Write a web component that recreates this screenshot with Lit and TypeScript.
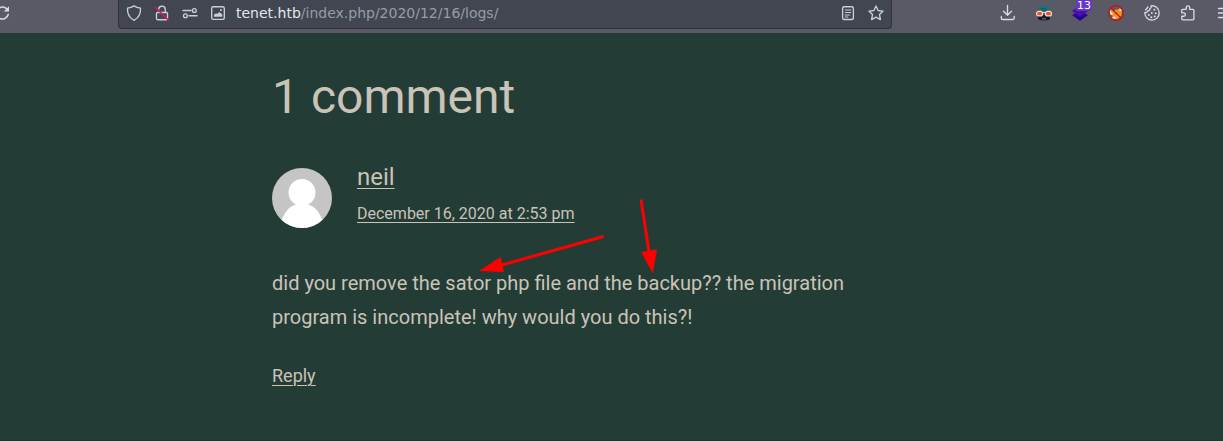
import { LitElement, html, css, svg } from "lit";
import { customElement, property } from "lit/decorators.js";

const icons: Record<string, unknown> = {
  reload: svg`<path d="M13.200 9.500A6 6 0 1 1 12 4.200" stroke-width="1.600"/><path d="M8.800 6.400h5.200V1.200z" fill="currentColor" stroke="none"/>`,
  shield: svg`<path d="M8 .9c1.8 1.3 4 2 6.5 2.2.4 5.3-1.8 9.6-6.500 12.200C3.300 12.700 1.100 8.400 1.500 3.100 4 2.900 6.200 2.200 8 .9z"/>`,
  lock: svg`<path d="M4.700 4.600a3.300 3.300 0 0 1 6.600-.2v3.100M3.500 7.500h9a1 1 0 0 1 1 1v5a1.200 1.200 0 0 1-1.200 1.200H3.700a1.200 1.200 0 0 1-1.200-1.200v-5a1 1 0 0 1 1-1z"/><path d="M1.300 2.300l13.200 13" stroke="#e0134a" stroke-width="1.500"/>`,
  sliders: svg`<path d="M1 5.500h8M7 10.700h8"/><circle cx="12.300" cy="5.500" r="1.900"/><circle cx="3.400" cy="10.700" r="1.900"/>`,
  image: svg`<rect x="1.700" y="1.700" width="12.600" height="12.600" rx="1.500"/><path d="M4 11.700V9.700l2-1.500 1.300.8 2-2 3 2.500v2.200z" fill="currentColor" stroke="none"/><rect x="10" y="4.300" width="1.700" height="1.700" fill="currentColor" stroke="none"/>`,
  reader: svg`<rect x="2.600" y="1.700" width="10.800" height="12.800" rx="1.500"/><path d="M5.200 5h5.600M5.200 7.500h5.600M5.200 10h4.500M5.200 12h2.500" stroke-width="1.100"/>`,
  star: svg`<path d="M8 1l2.100 4.500 5 .6-3.600 3.500.9 5L8 12.200l-4.400 2.400.9-5L.9 6.100l5-.6z"/>`,
  download: svg`<path d="M7.500 .5v9.500M3.500 6.300l4 4 4-4M1.300 11.500v1.500a1.500 1.500 0 0 0 1.500 1.500h9.900a1.500 1.500 0 0 0 1.500-1.500v-1.500"/>`,
  spy: svg`<g stroke="none"><path d="M1.500 7.500C2 3 4.500.3 8.500.3S14 2.800 14.500 7.500z" fill="#236e77"/><path d="M2 13.500V10h12v3.500c-.5 1.500-2.500 1.900-6 1.900s-5.500-.4-6-1.900z" fill="#171c24"/><path d="M6 12.800h4v2H6z" fill="#4c5460"/></g><path d="M5 3l5.500 2" stroke="#194c58" stroke-width="1"/><g stroke="#f0d9cf" stroke-width="1.200"><rect x=".6" y="6.300" width="5.900" height="4.600" rx="2" fill="#e8562e"/><rect x="9.500" y="6.300" width="5.900" height="4.600" rx="2" fill="#e8562e"/><path d="M6.500 7.500h3"/></g>`,
  layers: svg`<g stroke="none"><path d="M0 10l8-4 8 4-8 6z" fill="#26088c"/><path d="M0 6l8-5.500L16 6l-8 6z" fill="#4b0bb7"/></g>`,
  fox: svg`<g stroke="none"><path d="M2 3.500l3.500 3L8 4.500l4-.5 2 2-.5 4.500-4 3.800-5.500-.8.5-4L2 7z" fill="#ee941d"/><path d="M6.500 8.500l2-1.200 2 .7-2 1.500z" fill="#c45b16"/><path d="M1.500 5.500l3 2.500v2.500l-2-1zM11.500 3l2.500 2.500-2.500.5zM4 13l3-1.800 1.200 2.600z" fill="#f0ece5"/></g><circle cx="8" cy="8" r="7.300" stroke="#cf0d12" stroke-width="1.200"/><path d="M2.800 2.800l10.400 10.400" stroke="#cf0d12" stroke-width="1.200"/>`,
  cookie: svg`<path d="M7 .8A7.200 7.200 0 1 1 .8 7.400C2.300 8 3.500 7.300 3.500 5.800 5.500 6 6.300 5 5.800 3.600 7.200 3.300 7.700 2.200 7 .8zM1.600 5L4 2" stroke-width="1.300"/><g fill="currentColor" stroke="none"><circle cx="10.400" cy="4.700" r="1"/><circle cx="7.800" cy="8" r="1"/><circle cx="4.800" cy="10" r="1"/><circle cx="11.800" cy="8.300" r="1"/><circle cx="7.300" cy="12.200" r="1"/><circle cx="10.700" cy="11.500" r="1"/></g>`,
  puzzle: svg`<path d="M1.800 5.300a1 1 0 0 1 1-1h3.400V2.600a1.700 1.700 0 0 1 3.400 0v1.700h3.300a1 1 0 0 1 1 1v8.500a1 1 0 0 1-1 1H2.800a1 1 0 0 1-1-1v-2.600h1.900a1.700 1.700 0 0 0 0-3.400H1.800z"/>`,
  menu: svg`<path d="M2.500 3.500h12M2.500 8h12M2.500 12.500h12"/>`,
};

@customElement("ui-icon")
class UiIcon extends LitElement {
  @property() name = "";
  static styles = css`
    :host { display: block; width: 16px; height: 16px; flex: none; }
    svg { display: block; overflow: visible; }
  `;
  render() {
    return html`<svg width="16" height="16" viewBox="0 0 16 16" fill="none" stroke="currentColor" stroke-width="1.35" stroke-linejoin="round" stroke-linecap="round">${icons[this.name]}</svg>`;
  }
}

@customElement("browser-bar")
class BrowserBar extends LitElement {
  static styles = css`
    :host {
      display: flex; box-sizing: border-box; height: 34px; overflow: hidden;
      background: #5a5966; border-bottom: 1px solid #27383a; color: #d5dbe7;
      font-family: "DejaVu Sans", sans-serif;
    }
    .nav { width: 118px; flex: none; padding-top: 5px; box-sizing: border-box; }
    .nav ui-icon { margin-left: -5px; }
    .url {
      box-sizing: border-box; width: 774px; height: 29px; flex: none; display: flex;
      align-items: flex-start; gap: 12px; padding: 5px 7px 0 7px;
      background: #424651; border: 1px solid #30323d; border-top: 0; border-radius: 0 0 4px 4px;
      color: #c9ced9;
    }
    .address { flex: 1; margin-left: -2px; font-size: 14px; line-height: 17px; color: #989ca5; white-space: nowrap; }
    .host { color: #e3e6ee; }
    .tools { display: flex; gap: 20px; margin-left: 108px; padding-top: 5px; }
    .counter { position: relative; height: 16px; }
    .badge {
      position: absolute; left: 4px; top: -6px; width: 16px; height: 12px; border-radius: 2px;
      background: #6538c4; color: #fff; font-size: 11px; line-height: 13px; text-align: center;
    }
  `;
  render() {
    return html`
      <div class="nav"><ui-icon name="reload"></ui-icon></div>
      <div class="url">
        ${["shield", "lock", "sliders", "image"].map((n) => html`<ui-icon name=${n}></ui-icon>`)}
        <div class="address"><span class="host">tenet.htb</span>/index.php/2020/12/16/logs/</div>
        <ui-icon name="reader"></ui-icon><ui-icon name="star"></ui-icon>
      </div>
      <div class="tools">
        <ui-icon name="download"></ui-icon><ui-icon name="spy"></ui-icon>
        <div class="counter"><ui-icon name="layers"></ui-icon><span class="badge">13</span></div>
        ${["fox", "cookie", "puzzle", "menu"].map((n) => html`<ui-icon name=${n}></ui-icon>`)}
      </div>`;
  }
}

@customElement("comment-thread")
class CommentThread extends LitElement {
  static styles = css`
    :host { display: block; width: 610px; padding: 32px 0 0 272px; color: #c9c3b8; font-family: Roboto, sans-serif; }
    h2 { margin: 0; font-size: 48px; line-height: 62px; font-weight: 400; }
    .meta { display: flex; gap: 25px; margin-top: 40px; height: 60px; }
    .avatar { display: block; flex: none; }
    .who { display: flex; flex-direction: column; align-items: flex-start; }
    a { text-decoration: underline; text-decoration-thickness: 1px; }
    .name { font-size: 24px; line-height: 28px; margin-top: -5px; text-underline-offset: 3px; }
    .date { font-size: 16px; line-height: 20px; margin-top: 13px; text-underline-offset: 3px; }
    p { margin: 38px 0 0; font-size: 20px; line-height: 34px; }
    .reply { display: inline-block; margin-top: 31px; font-size: 18px; line-height: 22px; text-underline-offset: 3px; }
  `;
  render() {
    return html`
      <h2>1 comment</h2>
      <div class="meta">
        <svg class="avatar" width="60" height="60" viewBox="0 0 60 60">
          <defs><clipPath id="round"><circle cx="30" cy="30" r="30"/></clipPath></defs>
          <g clip-path="url(#round)">
            <rect width="60" height="60" fill="#c5c5c5"/>
            <circle cx="30" cy="24.500" r="13.500" fill="#fff"/>
            <path d="M8 60C10 45 18 35.500 30 35.500S50 45 52 60z" fill="#fff"/>
          </g>
        </svg>
        <div class="who"><a class="name">neil</a><a class="date">December 16, 2020 at 2:53 pm</a></div>
      </div>
      <p>did you remove the sator php file and the backup?? the migration<br>program is incomplete! why would you do this?!</p>
      <a class="reply">Reply</a>`;
  }
}

@customElement("app-root")
class AppRoot extends LitElement {
  static styles = css`
    :host { display: block; position: relative; box-sizing: border-box; width: 1223px; height: 441px; overflow: hidden; background: #243c36; border-bottom: 1px solid #20332f; }
    .arrows { position: absolute; left: 0; top: 0; pointer-events: none; }
  `;
  render() {
    return html`
      <browser-bar></browser-bar>
      <comment-thread></comment-thread>
      <svg class="arrows" width="1223" height="441" viewBox="0 0 1223 441" fill="#f00">
        <path d="M603.500 236.500L500 265.500M641 199.500L649 252" stroke="#f00" stroke-width="3"/>
        <path d="M479 271l21.500-14 3.500 15zM652.800 273.500L641.200 252l15.800-2.800z"/>
      </svg>`;
  }
}
